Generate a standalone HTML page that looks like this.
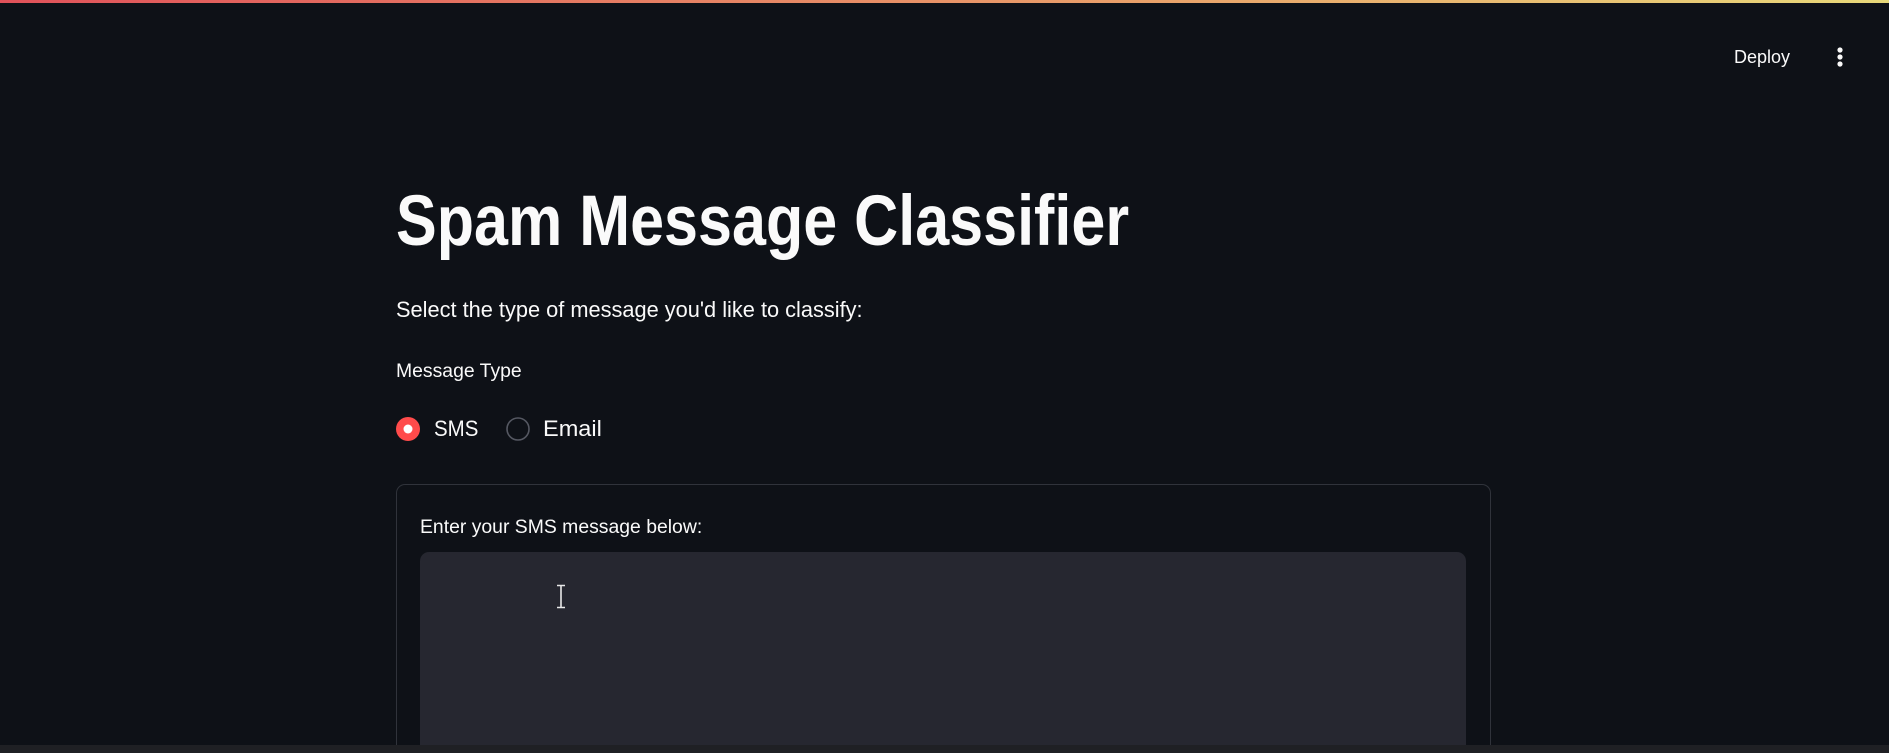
<!DOCTYPE html>
<html><head><meta charset="utf-8">
<style>
html,body{margin:0;padding:0;overflow:hidden;width:1889px;height:753px;background:#0e1117;}
#w{width:1889px;height:753px;overflow:hidden;position:relative;font-family:"Liberation Sans",sans-serif;color:#fafafa;}
.bar{position:absolute;left:0;top:0;width:1889px;height:3px;background:linear-gradient(90deg,#e0525a,#e9a06a 60%,#e8d97a);}
.abs{position:absolute;white-space:nowrap;}
.sx{display:inline-block;transform-origin:left center;}
</style></head><body><div id="w">
<div class="bar"></div>
<div class="abs" style="left:1734px;top:46px;font-size:18px;line-height:22px;">Deploy</div>
<svg class="abs" style="left:1834px;top:46px" width="12" height="22"><circle cx="6" cy="4" r="2.6" fill="#fafafa"/><circle cx="6" cy="11" r="2.6" fill="#fafafa"/><circle cx="6" cy="18" r="2.6" fill="#fafafa"/></svg>
<div class="abs" style="left:396px;top:180px;font-size:71px;line-height:84px;font-weight:bold;"><span class="sx" style="transform:scaleX(0.86)">Spam Message Classifier</span></div>
<div class="abs" style="left:396px;top:297px;font-size:22px;line-height:26px;"><span class="sx" style="transform:scaleX(0.99)">Select the type of message you'd like to classify:</span></div>
<div class="abs" style="left:396px;top:361px;font-size:19px;line-height:22px;"><span class="sx" style="transform:scaleX(1.02)">Message Type</span></div>
<svg class="abs" style="left:396px;top:417px" width="24" height="24"><circle cx="12" cy="12" r="12" fill="#ff4b4b"/><circle cx="12" cy="12" r="4.5" fill="#fff"/></svg>
<div class="abs" style="left:434px;top:416px;font-size:22px;line-height:26px;"><span class="sx" style="transform:scaleX(0.93)">SMS</span></div>
<svg class="abs" style="left:506px;top:417px" width="24" height="24"><circle cx="12" cy="12" r="11" fill="none" stroke="#555862" stroke-width="1.6"/></svg>
<div class="abs" style="left:543px;top:416px;font-size:22px;line-height:26px;"><span class="sx" style="transform:scaleX(1.07)">Email</span></div>
<div class="abs" style="left:396px;top:484px;width:1093px;height:268px;border:1px solid #30333b;border-bottom:none;border-radius:9px 9px 0 0;"></div>
<div class="abs" style="left:420px;top:517px;font-size:19px;line-height:22px;"><span class="sx" style="transform:scaleX(1.02)">Enter your SMS message below:</span></div>
<div class="abs" style="left:420px;top:552px;width:1046px;height:193px;background:#262730;border-radius:9px 9px 0 0;"></div>
<svg class="abs" style="left:554px;top:584px" width="14" height="26"><path d="M3 1.5h8M7 1.5v22M3 23.5h8" stroke="#e8e8e8" stroke-width="1.6" fill="none"/></svg>
<div class="abs" style="left:0;top:745px;width:1889px;height:8px;background:#1f2024;"></div>
</div></body></html>
